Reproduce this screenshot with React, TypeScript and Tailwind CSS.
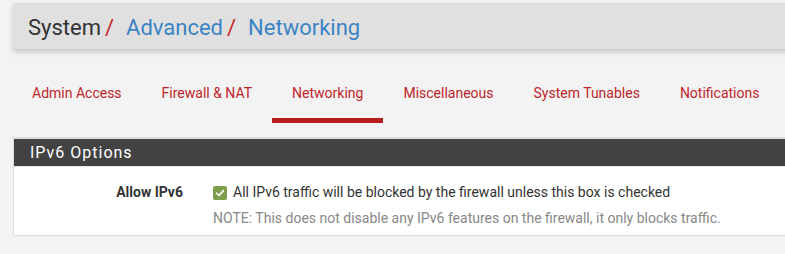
import React from "react";

const tabs = [
  "Admin Access",
  "Firewall & NAT",
  "Networking",
  "Miscellaneous",
  "System Tunables",
  "Notifications",
];

export default function App() {
  return (
    <div
      className="min-h-[254px] w-[785px] overflow-hidden bg-[#f3f3f3] pl-[13px]"
      style={{ fontFamily: "Roboto, 'Liberation Sans', sans-serif" }}
    >
      {/* breadcrumb */}
      <div className="mt-[3px] flex h-[46px] w-[800px] items-center bg-[#e0e0e0] pl-[15px] pt-[3px] text-[22px] shadow-[0_3px_5px_rgba(0,0,0,0.18)]">
        <span className="text-[#333]">System</span>
        <span className="ml-[4px] mr-[12px] text-[#c62828]">/</span>
        <span className="text-[#3b83c5]">Advanced</span>
        <span className="ml-[4px] mr-[12px] text-[#c62828]">/</span>
        <span className="text-[#3b83c5]">Networking</span>
      </div>

      {/* tabs */}
      <div className="mt-[20px] flex h-[70px] w-[800px] border-b-2 border-[#dedede] text-[14px] text-[#c0242b]">
        {tabs.map((t, i) => (
          <div key={t} className={`flex flex-col items-center ${i === 0 ? "-ml-[1px]" : ""}`}>
            <div className="flex h-[49px] items-center px-[20px]">{t}</div>
            {t === "Networking" && <div className="h-[5px] w-full bg-[#b71c1c]" />}
          </div>
        ))}
      </div>

      {/* panel */}
      <div className="w-[800px] border-l border-[#dcdcdc] bg-white">
        <div className="flex h-[27px] items-center bg-[#424242] pl-[16px] text-[16px] font-normal tracking-[1px] text-white">
          IPv6 Options
        </div>
        <div className="flex h-[70px] border-t border-[#e6e6e6] border-b border-b-[#dedede]">
          <div className="w-[169px] pt-[15px] text-right text-[14px] font-bold text-[#333]">
            Allow IPv6
          </div>
          <div className="pl-[30px] pt-[15px]">
            <div className="flex items-center text-[14px] text-[#333]">
              <span className="mr-[6px] flex h-[14px] w-[14px] items-center justify-center rounded-[2px] bg-[#7e9f4e]">
                <svg viewBox="0 0 12 12" className="h-[10px] w-[10px]" fill="none">
                  <path d="M2 6.3 4.8 9 10 3.2" stroke="white" strokeWidth="2" strokeLinecap="round" strokeLinejoin="round" />
                </svg>
              </span>
              All IPv6 traffic will be blocked by the firewall unless this box is checked
            </div>
            <div className="mt-[5px] text-[14px] text-[#888]">
              NOTE: This does not disable any IPv6 features on the firewall, it only blocks traffic.
            </div>
          </div>
        </div>
      </div>
    </div>
  );
}
